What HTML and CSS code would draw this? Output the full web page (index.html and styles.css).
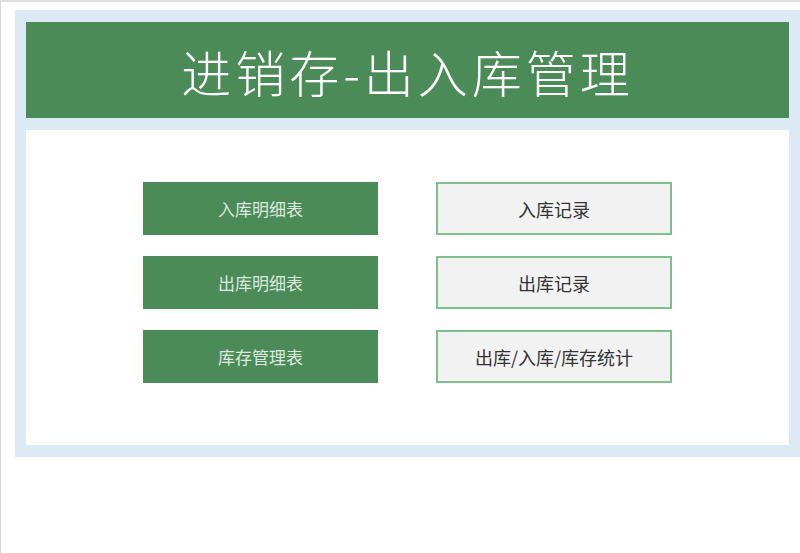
FILE: index.html
```html
<!DOCTYPE html>
<html lang="zh-CN">

<head>
    <meta charset="UTF-8">
    <meta name="viewport" content="width=device-width, initial-scale=1.0">
    <title>进销存-出入库管理</title>
    <link rel="stylesheet" href="styles.css">
</head>

<body>
    <div class="pagina">
        <div class="painel">
            <div class="cabecalho">
                <h1>进销存-出入库管理</h1>
            </div>

            <!-- Menu principal: tabelas à esquerda, registros à direita -->
            <div class="conteudo">
                <div class="menu">
                    <a class="botao botao-tabela" href="#">入库明细表</a>
                    <a class="botao botao-registro" href="#">入库记录</a>
                    <a class="botao botao-tabela" href="#">出库明细表</a>
                    <a class="botao botao-registro" href="#">出库记录</a>
                    <a class="botao botao-tabela" href="#">库存管理表</a>
                    <a class="botao botao-registro" href="#">出库/入库/库存统计</a>
                </div>
            </div>
        </div>
    </div>
</body>

</html>
```

FILE: styles.css
```css
body {
    font-family: "Noto Sans CJK SC", "Noto Sans", sans-serif;
    background-color: #fff;
    margin: 0;
    padding: 0;
    overflow: hidden;
}

.pagina {
    height: 553px;
    box-sizing: border-box;
    border-top: 2px solid #dedede;
    border-left: 1px solid #d8d8d8;
    padding-top: 8px;
    padding-left: 14px;
}

.painel {
    background-color: #ddeaf6;
    padding: 12px 11px;
}

.cabecalho {
    background-color: #4a8b57;
    height: 96px;
    margin-bottom: 12px;
    display: flex;
    align-items: center;
    justify-content: center;
}

h1 {
    margin: 0;
    color: #fff;
    font-size: 50px;
    font-weight: 300;
    letter-spacing: 4px;
    padding-top: 2px;
}

.conteudo {
    background-color: #fff;
    height: 315px;
    padding-top: 52px;
    box-sizing: border-box;
}

.menu {
    display: grid;
    grid-template-columns: 235px 236px;
    column-gap: 58px;
    row-gap: 21px;
    justify-content: center;
}

.botao {
    display: flex;
    align-items: center;
    justify-content: center;
    height: 53px;
    box-sizing: border-box;
    text-decoration: none;
    font-size: 17px;
}

.botao-tabela {
    background-color: #4a8b57;
    color: #dde9de;
}

.botao-registro {
    background-color: #f2f2f2;
    border: 2px solid #7fbf8c;
    color: #333;
    font-size: 18px;
}
```
